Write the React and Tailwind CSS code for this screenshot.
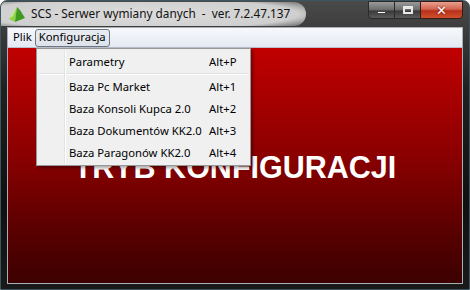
import React from "react";

const items = [
  ["Baza Pc Market", "Alt+1"],
  ["Baza Konsoli Kupca 2.0", "Alt+2"],
  ["Baza Dokumentów KK2.0", "Alt+3"],
  ["Baza Paragonów KK2.0", "Alt+4"],
];

function AppIcon() {
  return (
    <svg width="17" height="15" viewBox="0 0 17 15">
      <polygon points="8,0 0,12 6,15" fill="#8fd14a" />
      <polygon points="8,0 6,15 16,11" fill="#3e9a1c" />
      <polygon points="8,0 0,12 4,9" fill="#c9ef8a" />
      <polygon points="8,0 11,3 16,11" fill="#2b7a12" />
    </svg>
  );
}

export default function App() {
  return (
    <div
      className="relative w-[470px] h-[290px] overflow-hidden rounded-t-[7px] border border-[#3c5560] bg-[linear-gradient(to_bottom,#4a4a4a,#202020_30%,#101010_70%,#1a1a1a)] flex flex-col"
      style={{ fontFamily: '"Noto Sans", "DejaVu Sans", sans-serif' }}
    >
      {/* Title bar */}
      <div className="h-[26px] flex items-start shrink-0 relative">
        <div className="flex items-center h-[24px] mt-[1px] pl-[8px] pr-[16px] rounded-r-[12px] bg-[radial-gradient(ellipse_75%_90%_at_45%_50%,#dcdcdc_0%,#cfcfcf_70%,rgba(40,40,40,0)_100%)]">
          <AppIcon />
          <span className="ml-[5px] text-[11.8px] leading-none text-[#111] whitespace-pre">
            SCS - Serwer wymiany danych  -  ver. 7.2.47.137
          </span>
        </div>
        <div className="ml-auto mr-[6px] flex h-[18px]">
          <div className="w-[27px] h-full rounded-bl-[4px] border border-[#2a2a2a] bg-[linear-gradient(to_bottom,#9a9a9a,#6a6a6a_50%,#3a3a3a_55%,#5a5a5a)] flex items-end justify-center pb-[4px]">
            <div className="w-[9px] h-[3px] bg-white border border-[#444]" />
          </div>
          <div className="w-[25px] h-full border-y border-[#2a2a2a] bg-[linear-gradient(to_bottom,#9a9a9a,#6a6a6a_50%,#3a3a3a_55%,#5a5a5a)] flex items-center justify-center">
            <div className="w-[10px] h-[8px] border-2 border-[#e8e8e8] border-t-[3px]" />
          </div>
          <div className="w-[43px] h-full rounded-br-[4px] border border-[#3a1a10] bg-[linear-gradient(to_bottom,#e8a090,#d26450_45%,#b8301a_55%,#d0502c)] flex items-center justify-center">
            <span className="text-white font-bold text-[13px] leading-none" style={{ fontFamily: '"DejaVu Sans", sans-serif', textShadow: "0 0 2px #5a1000" }}>
              ✕
            </span>
          </div>
        </div>
      </div>

      {/* Client */}
      <div className="mx-[6px] mb-[5px] flex-1 flex flex-col border border-[#a8b0b4]">
        {/* Menu bar */}
        <div className="h-[20px] shrink-0 flex items-center bg-[linear-gradient(to_bottom,#f6f8fb,#e4e9f3)] border-b border-[#b8c0cc] text-[11.3px] text-black">
          <span className="ml-[4px] px-[1px]">Plik</span>
          <span className="ml-[2px] h-[18px] px-[3px] flex items-center rounded-[3px] border border-[#6f7680] bg-[linear-gradient(to_bottom,#e8ecf2,#dde2ea)]">
            Konfiguracja
          </span>
        </div>
        {/* Red area */}
        <div className="flex-1 bg-[linear-gradient(to_bottom,#c00000,#8c0000_45%,#560000_80%,#3c0000)] flex justify-center pt-[102px]">
          <span
            className="text-white font-bold text-[30.5px] leading-[34px] h-[34px]"
            style={{ fontFamily: '"Liberation Sans", Arial, sans-serif' }}
          >
            TRYB KONFIGURACJI
          </span>
        </div>
      </div>

      {/* Dropdown menu */}
      <div className="absolute left-[35px] top-[47px] w-[215px] h-[118px] border border-[#979797] bg-[#f0f0f0] shadow-[2px_2px_3px_rgba(0,0,0,0.35)] text-[11.3px] text-black pt-[2px]">
        <div className="absolute left-[27px] top-[1px] bottom-[1px] w-[2px] border-l border-[#e2e3e3] bg-transparent border-r border-r-white" />
        <div className="h-[22px] flex items-center">
          <span className="ml-[32px] w-[140px]">Parametry</span>
          <span>Alt+P</span>
        </div>
        <div className="h-[3px] mx-[2px] border-t border-[#e0e0e0] bg-transparent">
          <div className="border-t border-white" />
        </div>
        {items.map(([a, b]) => (
          <div key={a} className="h-[22px] flex items-center">
            <span className="ml-[32px] w-[140px] whitespace-nowrap">{a}</span>
            <span>{b}</span>
          </div>
        ))}
      </div>
    </div>
  );
}
